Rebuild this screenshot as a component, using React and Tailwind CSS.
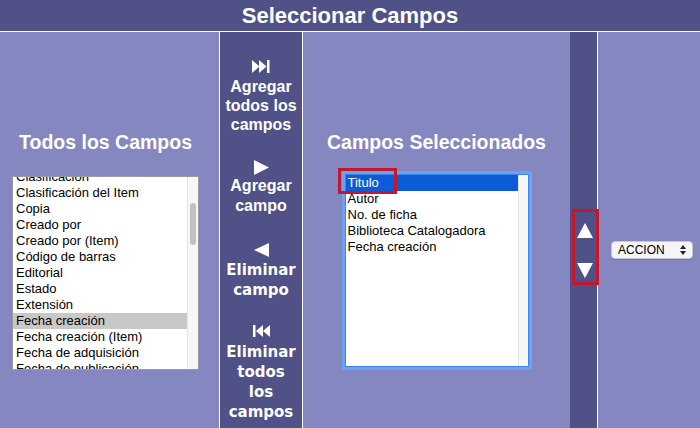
const allFields = [
  'Clasificación',
  'Clasificación del Item',
  'Copia',
  'Creado por',
  'Creado por (Item)',
  'Código de barras',
  'Editorial',
  'Estado',
  'Extensión',
  'Fecha creación',
  'Fecha creación (Item)',
  'Fecha de adquisición',
  'Fecha de publicación',
];

const selectedFields = ['Titulo', 'Autor', 'No. de ficha', 'Biblioteca Catalogadora', 'Fecha creación'];

function AddAllIcon() {
  return (
    <svg width="18" height="13" viewBox="0 0 18 13" fill="white">
      <polygon points="0,0 7.5,6.5 0,13" />
      <polygon points="7,0 14.5,6.5 7,13" />
      <rect x="15" y="0" width="2.5" height="13" />
    </svg>
  );
}

function RemoveAllIcon() {
  return (
    <svg width="17" height="12" viewBox="0 0 17 12" fill="white">
      <rect x="0" y="0" width="2.5" height="12" />
      <polygon points="10,0 3,6 10,12" />
      <polygon points="17,0 10,6 17,12" />
    </svg>
  );
}

function Triangle({ dir, w, h }) {
  const pts = {
    right: `0,0 ${w},${h / 2} 0,${h}`,
    left: `${w},0 0,${h / 2} ${w},${h}`,
    up: `${w / 2},0 ${w},${h} 0,${h}`,
    down: `0,0 ${w},0 ${w / 2},${h}`,
  }[dir];
  return (
    <svg width={w} height={h} viewBox={`0 0 ${w} ${h}`} fill="white">
      <polygon points={pts} />
    </svg>
  );
}

export default function App() {
  return (
    <div className="w-[700px] h-[428px] overflow-hidden bg-[#8587c1] font-['Liberation_Sans',Arial,sans-serif]">
      <div className="h-[32px] bg-[#4f5187] border-b border-white flex items-center justify-center">
        <h1 className="text-[22px] font-bold text-white leading-none">Seleccionar Campos</h1>
      </div>

      <div className="flex h-[396px]">
        {/* todos los campos */}
        <div className="w-[220px] shrink-0 border-r border-white pl-[12px]">
          <div className="w-[187px] mt-[99px] text-center text-[19.5px] font-bold text-white leading-[23px]">Todos los Campos</div>
          <div className="w-[187px] h-[194px] mt-[22px] border border-[#9b9b9b] bg-white flex overflow-hidden">
            <div className="flex-1 overflow-hidden">
              <ul className="-mt-[8px] text-[13px] text-black leading-[16px]">
                {allFields.map((f) => (
                  <li key={f} className={`h-[16px] pl-[3px] whitespace-nowrap ${f === 'Fecha creación' ? 'bg-[#c8c8c8]' : ''}`}>{f}</li>
                ))}
              </ul>
            </div>
            <div className="w-[11px] shrink-0 border-l border-[#e6e6e6] bg-[#f7f7f7] pt-[26px] flex justify-center">
              <div className="w-[6px] h-[42px] rounded-full bg-[#c1c1c1]" />
            </div>
          </div>
        </div>

        {/* botones */}
        <div className="w-[83px] shrink-0 border-r border-white bg-[#4f5187] flex flex-col items-center text-white text-center font-bold">
          <div className="mt-[28px]"><AddAllIcon /></div>
          <div className="mt-[4px] text-[16px] leading-[19px]">Agregar<br />todos los<br />campos</div>
          <div className="mt-[26px] h-[15px]"><Triangle dir="right" w={15} h={15} /></div>
          <div className="mt-[1px] text-[16px] leading-[20px]">Agregar<br />campo</div>
          <div className="mt-[27px] h-[14px]"><Triangle dir="left" w={15} h={14} /></div>
          <div className="mt-[3px] text-[15px] leading-[20px] font-['DejaVu_Sans',Verdana,sans-serif]">Eliminar<br />campo</div>
          <div className="mt-[25px] h-[12px]"><RemoveAllIcon /></div>
          <div className="mt-[5px] text-[15px] leading-[20px] font-['DejaVu_Sans',Verdana,sans-serif]">Eliminar<br />todos<br />los<br />campos</div>
        </div>

        {/* campos seleccionados */}
        <div className="w-[267px] shrink-0 flex flex-col items-center">
          <div className="mt-[99px] text-[19.5px] font-bold text-white leading-[23px]">Campos Seleccionados</div>
          <div className="relative mt-[20px] w-[184px] h-[193px] bg-white flex outline outline-[3px] outline-[#69a3f2] border border-[#3d84e6]">
            <div className="flex-1 overflow-hidden">
              <ul className="text-[13px] text-black leading-[16px]">
                {selectedFields.map((f, i) => (
                  <li key={f} className={`h-[16px] pl-[2px] whitespace-nowrap ${i === 0 ? 'bg-[#0b5cd6] text-white' : ''}`}>{f}</li>
                ))}
              </ul>
            </div>
            <div className="w-[10px] shrink-0 border-l border-[#e6e6e6] bg-[#f7f7f7]" />
            <div className="absolute -left-[8px] -top-[7px] w-[59px] h-[26px] border-[3px] border-[#c3172b]" />
          </div>
        </div>

        {/* ordenar */}
        <div className="relative w-[28px] shrink-0 border-r border-white bg-[#4f5187] flex flex-col items-center">
          <div className="mt-[191px] ml-[2px]"><Triangle dir="up" w={16} h={15} /></div>
          <div className="mt-[25px] ml-[2px]"><Triangle dir="down" w={16} h={15} /></div>
          <div className="absolute left-[2px] top-[177px] w-[27px] h-[76px] border-[3px] border-[#c3172b]" />
        </div>

        {/* accion */}
        <div className="flex-1 pl-[13px] pt-[209px]">
          <div className="w-[82px] h-[18px] rounded-[4px] bg-[#f5f5f5] border border-[#c9c9d6] shadow-[0_1px_1px_rgba(0,0,0,0.15)] flex items-center justify-between pl-[6px] pr-[6px]">
            <span className="text-[12px] text-black leading-none">ACCION</span>
            <svg width="6" height="10" viewBox="0 0 6 10" fill="#222">
              <polygon points="3,0 6,4 0,4" />
              <polygon points="0,6 6,6 3,10" />
            </svg>
          </div>
        </div>
      </div>
    </div>
  );
}
